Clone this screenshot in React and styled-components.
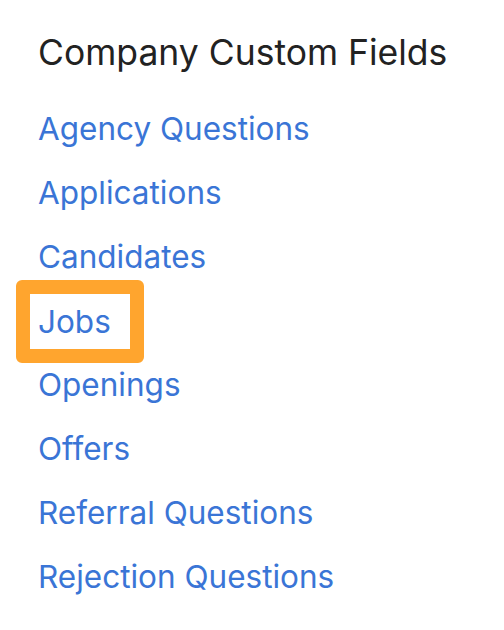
import React from "react";
import styled, { createGlobalStyle } from "styled-components";

const Global = createGlobalStyle`
  html, body { margin: 0; padding: 0; background: #fff; }
  body { font-family: Inter, "Noto Sans", sans-serif; }
`;

const Panel = styled.div`
  width: 504px;
  height: 630px;
  box-sizing: border-box;
  padding: 31px 0 0 38px;
  display: flex;
  flex-direction: column;
`;

const Title = styled.h2`
  margin: 0 0 22px;
  font-size: 35.5px;
  font-weight: 400;
  color: #222;
  line-height: 44px;
`;

const List = styled.ul`
  list-style: none;
  margin: 0;
  padding: 0;
  display: flex;
  flex-direction: column;
`;

const Item = styled.li`
  height: 64px;
  display: flex;
  align-items: center;
`;

const Link = styled.a`
  font-size: 31.5px;
  color: #3a75d6;
  text-decoration: none;
  line-height: 36px;
  display: inline-block;
  ${(p) =>
    p.$highlight &&
    `
    border: 14px solid #ffa52e;
    border-radius: 6px;
    padding: 10px 19px 9px 8px;
    margin-left: -22px;
  `}
`;

const items = [
  "Agency Questions",
  "Applications",
  "Candidates",
  "Jobs",
  "Openings",
  "Offers",
  "Referral Questions",
  "Rejection Questions",
];

export default function App() {
  return (
    <>
      <Global />
      <Panel>
        <Title>Company Custom Fields</Title>
        <List>
          {items.map((t) => (
            <Item key={t}>
              <Link href="#" $highlight={t === "Jobs"}>
                {t}
              </Link>
            </Item>
          ))}
        </List>
      </Panel>
    </>
  );
}
